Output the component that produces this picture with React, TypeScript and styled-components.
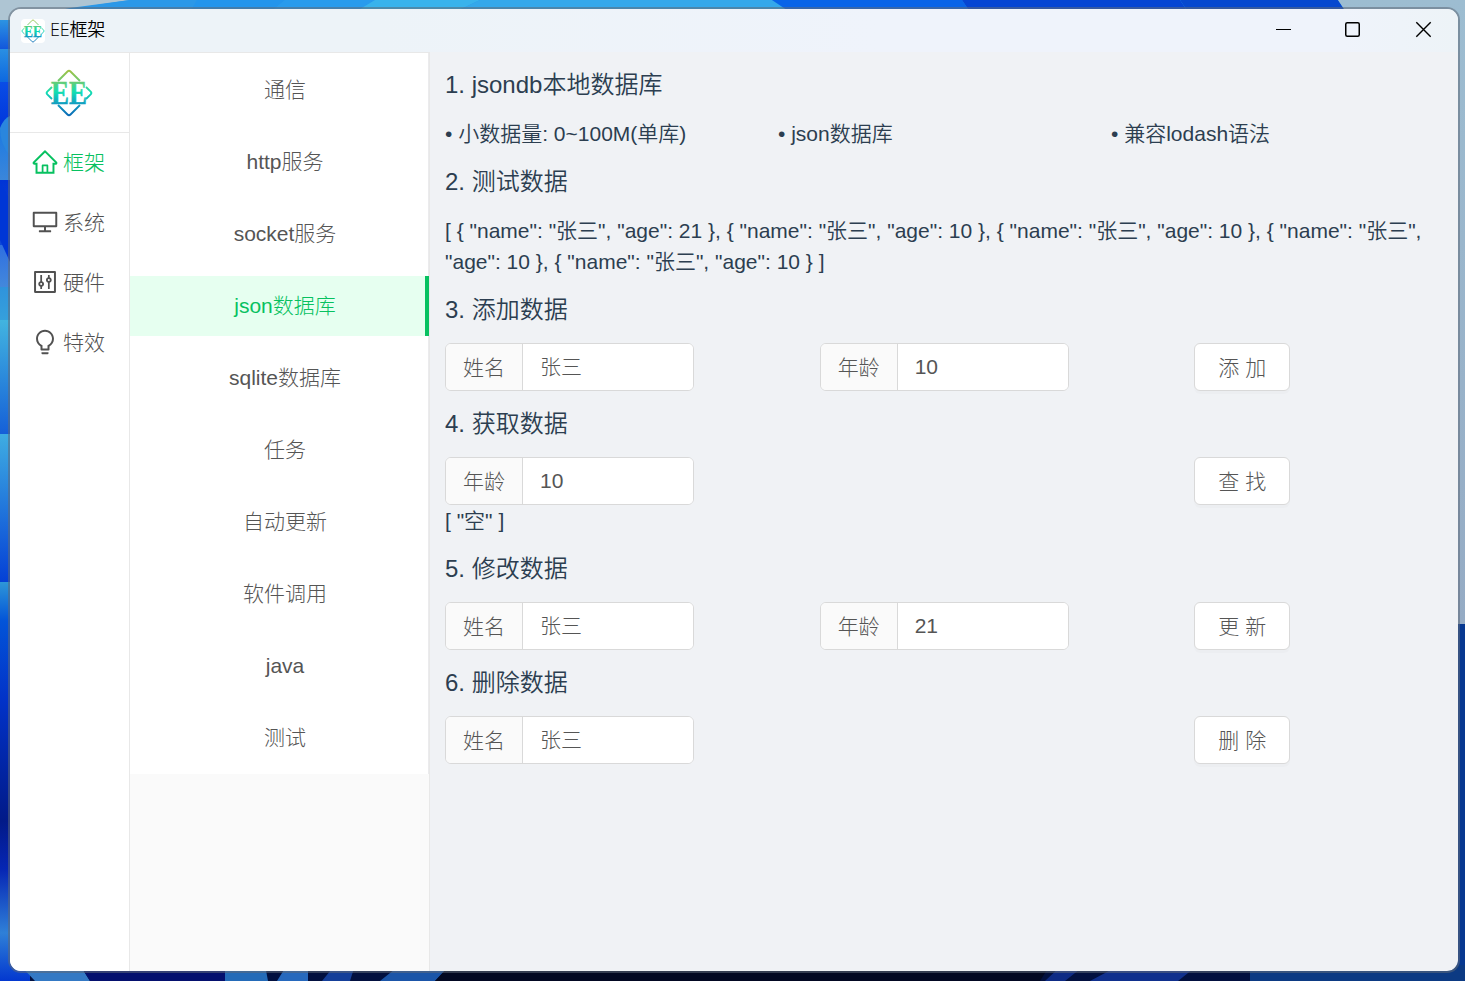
import React from 'react';
import styled, { createGlobalStyle } from 'styled-components';
import { AiOutlineHome, AiOutlineDesktop, AiOutlineControl, AiOutlineBulb } from 'react-icons/ai';

const GlobalStyle = createGlobalStyle`
  *, *::before, *::after { box-sizing: border-box; }
  body { margin: 0; overflow: hidden; }
  h2, p, ul { margin: 0; padding: 0; font-weight: inherit; }
  input, button { font: inherit; }
`;

const Desktop = styled.div`
  position: relative;
  width: 1465px;
  height: 981px;
  padding: 7px 5px 8px 8px;
  overflow: hidden;
  background: #02103f;
  font-family: 'Liberation Sans', 'Noto Sans CJK SC', sans-serif;
  font-size: 21px;
  font-weight: 300;
  line-height: 31.5px;
  color: #2c3e50;
`;

const WallpaperSvg = styled.svg`
  position: absolute;
  inset: 0;
`;

const AppWindow = styled.main`
  position: relative;
  display: flex;
  flex-direction: column;
  height: 966px;
  border: 2px solid rgba(95, 105, 120, 0.55);
  border-radius: 13px;
  background: #f0f2f5;
  background-clip: padding-box;
  overflow: hidden;
`;

const TitleBar = styled.header`
  display: flex;
  align-items: center;
  height: 43px;
  flex: none;
  padding-left: 11px;
  background: linear-gradient(90deg, #edf3f8 0%, #edf3f8 25%, #eff3fb 60%, #eff3fb 92%, #edf3f7 100%);
`;

const AppIcon = styled.span`
  display: flex;
  width: 24px;
  height: 24px;
  border-radius: 4px;
  background: #fff;
`;

const Title = styled.span`
  flex: 1;
  margin-left: 5px;
  padding-bottom: 1px;
  font-family: 'Open Sans', 'Noto Sans CJK SC', sans-serif;
  font-size: 18px;
  font-weight: 350;
  letter-spacing: -0.2px;
  color: #000;
`;

const WindowControls = styled.div`
  display: flex;
  width: 212px;
  height: 43px;
`;

const Body = styled.div`
  display: flex;
  flex: 1;
  min-height: 0;
`;

const Sidebar = styled.nav`
  width: 120px;
  flex: none;
  background: #fff;
  border-top: 1px solid #e8e8e8;
  border-right: 1px solid #e8e8e8;
`;

const LogoBox = styled.div`
  display: flex;
  justify-content: center;
  align-items: center;
  height: 80px;
  padding-right: 1px;
  border-bottom: 1px solid #e8e8e8;
`;

const SideItem = styled.a<{ $active?: boolean }>`
  display: flex;
  align-items: center;
  height: 60px;
  padding-left: 21px;
  gap: 4px;
  color: ${(p) => (p.$active ? '#07c160' : '#515151')};
  svg { width: 28px; height: 28px; flex: none; margin-bottom: 3px; }
`;

const SubMenu = styled.nav`
  width: 300px;
  flex: none;
  background: #fafafa;
  border-top: 1px solid #e8e8e8;
  border-right: 1px solid #e8e8e8;
`;

const MenuList = styled.div`
  padding: 7px 0 6px;
  background: #fff;
  border-right: 1px solid #ebebed;
`;

const MenuItem = styled.a<{ $active?: boolean }>`
  display: flex;
  justify-content: center;
  align-items: center;
  height: 60px;
  margin-bottom: 12px;
  padding-left: 12px;
  color: ${(p) => (p.$active ? '#07c160' : '#555')};
  background: ${(p) => (p.$active ? '#e6fff0' : 'transparent')};
  box-shadow: ${(p) => (p.$active ? 'inset -3px 0 #07c160, 1px 0 #07c160' : 'none')};
  &:last-child { margin-bottom: 0; }
`;

const Content = styled.section`
  flex: 1;
  padding: 15px 14px 0 15px;
`;

const Heading = styled.h2`
  height: 36px;
  margin-bottom: 15px;
  font-size: 24px;
  font-weight: 350;
  line-height: 36px;
`;

const Block = styled.div`
  margin-bottom: 15px;
`;

const Features = styled.ul`
  display: grid;
  grid-template-columns: repeat(3, 1fr);
  height: 31px;
  margin-bottom: 15px;
  font-weight: 350;
  list-style: none;
`;

const DataText = styled.p`
  width: 990px;
  font-weight: 350;
  line-height: 31px;
`;

const FormRow = styled.div`
  display: grid;
  grid-template-columns: 3fr 3fr 2fr;
`;

const Field = styled.label`
  display: flex;
  width: 249px;
  height: 48px;
  border: 1px solid #d9d9d9;
  border-radius: 6px;
  background: #fff;
  overflow: hidden;
`;

const FieldLabel = styled.span`
  width: 77px;
  flex: none;
  padding-left: 17px;
  line-height: 47px;
  color: #555;
  background: #fafafa;
  border-right: 1px solid #d9d9d9;
`;

const FieldInput = styled.input`
  min-width: 0;
  flex: 1;
  padding: 0 17px;
  border: 0;
  outline: 0;
  color: #555;
  background: #fff;
`;

const ActionButton = styled.button`
  grid-column: 3;
  width: 96px;
  height: 48px;
  padding: 1px 0 0;
  border: 1px solid #d9d9d9;
  border-radius: 6px;
  color: #555;
  background: #fff;
  box-shadow: 0 3px 0 rgba(0, 0, 0, 0.016);
`;

const leftBands = [
  { y: 18, h: 31, from: '#2e98e2', to: '#1257dd' },
  { y: 49, h: 33, from: '#2a8fe2', to: '#0d68e0' },
  { y: 82, h: 46, from: '#0a4de6', to: '#0036dc' },
  { y: 128, h: 52, from: '#1c7ae2', to: '#3a86da' },
  { y: 180, h: 65, from: '#0034d6', to: '#0d48d8' },
  { y: 245, h: 42, from: '#2f6fe0', to: '#4388dc' },
  { y: 287, h: 33, from: '#2f93dc', to: '#35a0dc' },
  { y: 320, h: 114, from: '#42b4e0', to: '#1560d8' },
  { y: 434, h: 148, from: '#3fade2', to: '#0440d6' },
];

function Wallpaper() {
  return (
    <WallpaperSvg width="1465" height="981" viewBox="0 0 1465 981">
      <defs>
        {leftBands.map((b, i) => (
          <linearGradient key={b.y} id={`band${i}`} x1="0" y1="0" x2="0" y2="1">
            <stop offset="0" stopColor={b.from} />
            <stop offset="1" stopColor={b.to} />
          </linearGradient>
        ))}
        <linearGradient id="left" x1="0" y1="0" x2="0" y2="1">
          <stop offset="0" stopColor="#2f98d8" />
          <stop offset=".1" stopColor="#0354d8" />
          <stop offset=".3" stopColor="#0232c8" />
          <stop offset=".6" stopColor="#021a88" />
          <stop offset=".72" stopColor="#0626b4" />
          <stop offset=".88" stopColor="#2f80d8" />
          <stop offset="1" stopColor="#0338cf" />
        </linearGradient>
        <linearGradient id="sky" x1="0" y1="0" x2="0" y2="1">
          <stop offset="0" stopColor="#9dbdd1" />
          <stop offset="1" stopColor="#95abc4" />
        </linearGradient>
      </defs>
      <path d="M0 581H30V981H0Z" fill="url(#left)" />
      {leftBands.map((b, i) => (
        <path key={b.y} d={`M0 ${b.y}H30V${b.y + b.h}H0Z`} fill={`url(#band${i})`} />
      ))}
      <path d="M0 128Q4 118 10 116V156Q0 144 0 128Z" fill="#2a86de" />
      <path d="M0 182V240L10 262V200Z" fill="#0036d6" />
      <path d="M50 0H1350V12H50Z" fill="#2b98e8" />
      <path d="M0 0H130L70 8L10 20H0Z" fill="#aec5d3" />
      <path d="M130 0H197L190 12H50Z" fill="#2b98e8" />
      <path d="M197 0H285L270 12H190Z" fill="#2395ec" />
      <path d="M285 0H375L355 12H270Z" fill="#289bed" />
      <path d="M375 0H480L455 12H355Z" fill="#39b3ec" />
      <path d="M480 0H772L790 12H455Z" fill="#34a8eb" />
      <path d="M772 0H962L970 12H790Z" fill="#0864e8" />
      <path d="M962 0H1180L1188 12H970Z" fill="#0545d3" />
      <path d="M1180 0H1338L1346 12H1188Z" fill="#0648cf" />
      <path d="M1338 0H1465V624H1450V12H1346Z" fill="url(#sky)" />
      <path d="M1450 624H1465V981H1450Z" fill="#073890" />
      <path d="M20 965H80L90 981H35Z" fill="#3479c4" />
      <path d="M80 965H225V981H90Z" fill="#04106e" />
      <path d="M225 965H265L268 981H225Z" fill="#246bb8" />
      <path d="M287 965H308V981H277Z" fill="#2769bd" />
      <path d="M335 965H355L350 981H322Z" fill="#153f99" />
      <path d="M400 965H450L435 981H380Z" fill="#1b55a8" />
      <path d="M450 965H1050L1040 981H435Z" fill="#020822" />
      <path d="M1062 965H1085L1065 981H1045Z" fill="#0e2b85" />
      <path d="M1120 965H1198L1178 981H1090Z" fill="#10308d" />
      <path d="M1250 965H1465V981H1250Z" fill="#0c3a83" />
    </WallpaperSvg>
  );
}

function Logo({ size, id }: { size: number; id: string }) {
  return (
    <svg width={size} height={size} viewBox="0 0 48 48" overflow="visible">
      <defs>
        <linearGradient id={id} x1="0" y1="0" x2="0" y2="48" gradientUnits="userSpaceOnUse">
          <stop offset="0" stopColor="#a4c13e" />
          <stop offset=".25" stopColor="#6fca70" />
          <stop offset=".48" stopColor="#12dfb2" />
          <stop offset=".72" stopColor="#139fc0" />
          <stop offset="1" stopColor="#0863b5" />
        </linearGradient>
      </defs>
      <g fill="none" stroke={`url(#${id})`} strokeWidth="1.9" strokeLinejoin="round">
        <path d="M13 12L22.5 2.5Q24 1 25.5 2.5L35 12" />
        <path d="M13 36L22.5 45.5Q24 47 25.5 45.5L35 36" />
        <path d="M7 18L2.3 22.6Q1 24 2.3 25.4L7 30" />
        <path d="M41 18L45.7 22.6Q47 24 45.7 25.4L41 30" />
      </g>
      <text
        x="24" y="35" textAnchor="middle" textLength="36" lengthAdjust="spacingAndGlyphs"
        fontFamily="Liberation Serif, serif" fontWeight="700" fontSize="33"
        fill={`url(#${id})`} stroke={`url(#${id})`} strokeWidth=".5"
      >
        EE
      </text>
    </svg>
  );
}

const sideItems = [
  { label: '框架', icon: <AiOutlineHome />, active: true },
  { label: '系统', icon: <AiOutlineDesktop /> },
  { label: '硬件', icon: <AiOutlineControl /> },
  { label: '特效', icon: <AiOutlineBulb /> },
];

const menuItems = [
  '通信', 'http服务', 'socket服务', 'json数据库', 'sqlite数据库',
  '任务', '自动更新', '软件调用', 'java', '测试',
];

function InputField({ label, value }: { label: string; value: string }) {
  return (
    <Field>
      <FieldLabel>{label}</FieldLabel>
      <FieldInput defaultValue={value} />
    </Field>
  );
}

export default function App() {
  return (
    <Desktop>
      <GlobalStyle />
      <Wallpaper />
      <AppWindow>
        <TitleBar>
          <AppIcon><Logo size={24} id="logoSmall" /></AppIcon>
          <Title>EE框架</Title>
          <WindowControls>
            <svg width="212" height="43" viewBox="0 0 212 43" fill="none" stroke="#000">
              <path d="M30 20.5H45" />
              <rect x="99.75" y="13.75" width="13.5" height="13.5" rx="1.5" strokeWidth="1.5" />
              <path d="M170.3 13.3L184.7 27.7M184.7 13.3L170.3 27.7" strokeWidth="1.4" />
            </svg>
          </WindowControls>
        </TitleBar>
        <Body>
          <Sidebar>
            <LogoBox><Logo size={48} id="logoLarge" /></LogoBox>
            {sideItems.map((item) => (
              <SideItem key={item.label} $active={item.active}>
                {item.icon}
                {item.label}
              </SideItem>
            ))}
          </Sidebar>
          <SubMenu>
            <MenuList>
              {menuItems.map((label) => (
                <MenuItem key={label} $active={label === 'json数据库'}>{label}</MenuItem>
              ))}
            </MenuList>
          </SubMenu>
          <Content>
            <Heading>1. jsondb本地数据库</Heading>
            <Features>
              <li>• 小数据量: 0~100M(单库)</li>
              <li>• json数据库</li>
              <li>• 兼容lodash语法</li>
            </Features>
            <Heading>2. 测试数据</Heading>
            <Block>
              <DataText>
                {'[ { "name": "张三", "age": 21 }, { "name": "张三", "age": 10 }, { "name": "张三", "age": 10 }, { "name": "张三", "age": 10 }, { "name": "张三", "age": 10 } ]'}
              </DataText>
            </Block>
            <Heading>3. 添加数据</Heading>
            <Block>
              <FormRow>
                <InputField label="姓名" value="张三" />
                <InputField label="年龄" value="10" />
                <ActionButton>添 加</ActionButton>
              </FormRow>
            </Block>
            <Heading>4. 获取数据</Heading>
            <Block>
              <FormRow>
                <InputField label="年龄" value="10" />
                <ActionButton>查 找</ActionButton>
              </FormRow>
              <DataText>{'[ "空" ]'}</DataText>
            </Block>
            <Heading>5. 修改数据</Heading>
            <Block>
              <FormRow>
                <InputField label="姓名" value="张三" />
                <InputField label="年龄" value="21" />
                <ActionButton>更 新</ActionButton>
              </FormRow>
            </Block>
            <Heading>6. 删除数据</Heading>
            <Block>
              <FormRow>
                <InputField label="姓名" value="张三" />
                <ActionButton>删 除</ActionButton>
              </FormRow>
            </Block>
          </Content>
        </Body>
      </AppWindow>
    </Desktop>
  );
}
